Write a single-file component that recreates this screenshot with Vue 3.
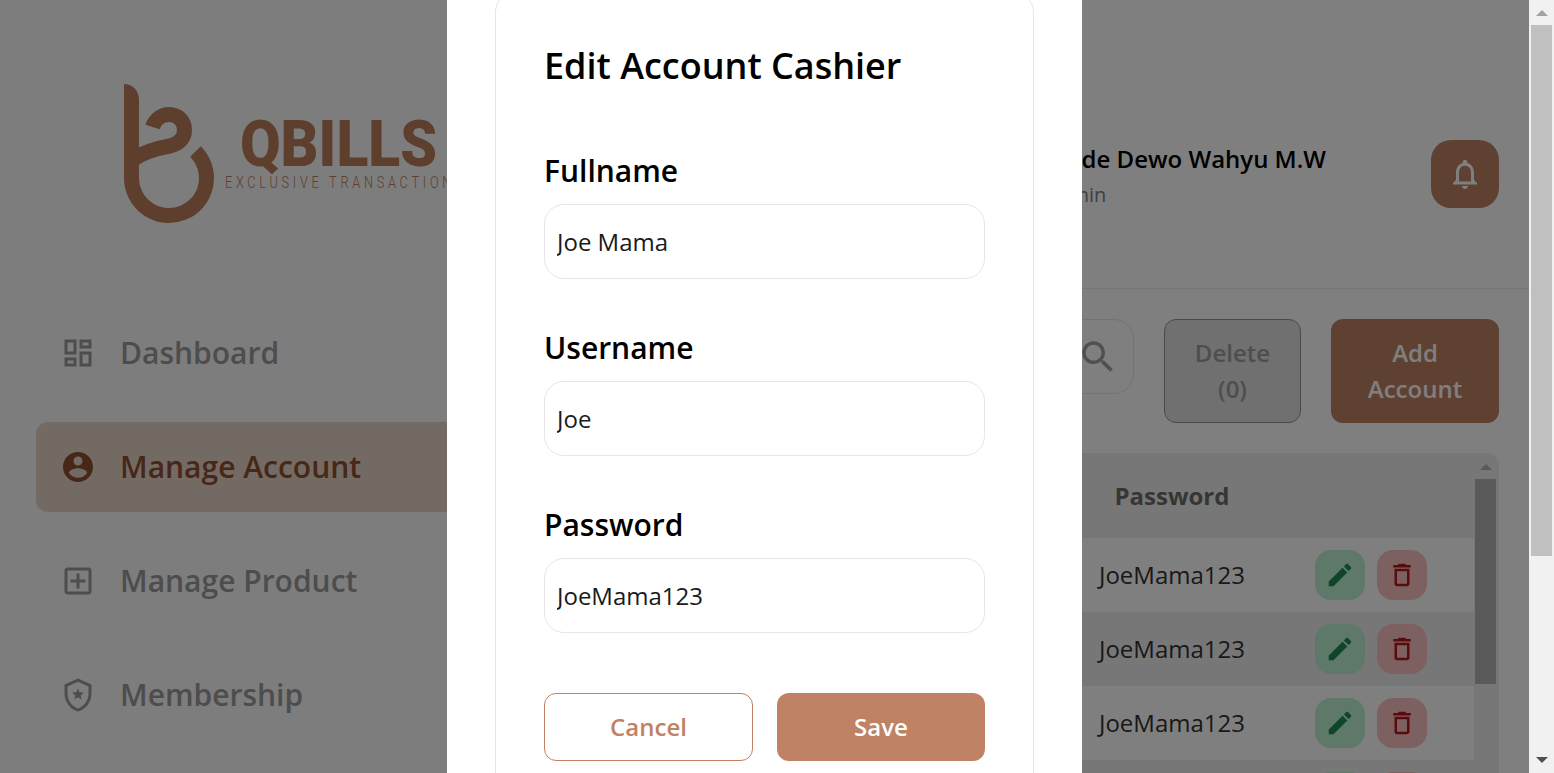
<script setup>
const nav = [
  { label: 'Dashboard', d: 'M19 5v2h-4V5h4M9 5v6H5V5h4m10 8v6h-4v-6h4M9 17v2H5v-2h4M21 3h-8v6h8V3zM11 3H3v10h8V3zm10 8h-8v10h8V11zm-10 4H3v6h8v-6z' },
  { label: 'Manage Account', active: true, d: 'M12 2C6.48 2 2 6.48 2 12s4.48 10 10 10 10-4.48 10-10S17.52 2 12 2zm0 3c1.66 0 3 1.34 3 3s-1.34 3-3 3-3-1.34-3-3 1.34-3 3-3zm0 14.2c-2.5 0-4.71-1.28-6-3.22.03-1.99 4-3.08 6-3.08 1.99 0 5.97 1.09 6 3.08-1.29 1.94-3.5 3.22-6 3.22z' },
  { label: 'Manage Product', d: 'M19 3H5c-1.1 0-2 .9-2 2v14c0 1.1.9 2 2 2h14c1.1 0 2-.9 2-2V5c0-1.1-.9-2-2-2zm0 16H5V5h14v14zM11 17h2v-4h4v-2h-4V7h-2v4H7v2h4z' },
  { label: 'Membership', d: 'M12 1L3 5v6c0 5.55 3.84 10.74 9 12 5.16-1.26 9-6.45 9-12V5l-9-4zm7 10c0 4.52-2.98 8.69-7 9.93-4.02-1.24-7-5.41-7-9.93V6.3l7-3.11 7 3.11V11zM12 7.6l1.1 2.6 2.8.2-2.1 1.85.65 2.75L12 13.5l-2.45 1.5.65-2.75-2.1-1.85 2.8-.2z' }
]
const rows = [1, 2, 3, 4]
const fields = [
  { label: 'Fullname', value: 'Joe Mama' },
  { label: 'Username', value: 'Joe' },
  { label: 'Password', value: 'JoeMama123' }
]
</script>

<template>
  <div class="page">
    <div class="main">
      <aside class="sidebar">
        <svg class="logo" width="444" height="150" viewBox="0 0 444 150">
          <g transform="translate(-36 -80)">
            <path d="M124 84C132 84 139 90 139 100V178H124Z" fill="#bd7f5c" />
            <path d="M131.5 178A37.5 37.5 0 1 0 195.5 151.5M152.5 127C155 119 162 114.5 169 114.5C178 114.5 184.5 121 184.5 130C184.5 139 178 144 170 146C158 148 145 151 132 160" fill="none" stroke="#bd7f5c" stroke-width="15" />
            <text x="240" y="166" textLength="197" lengthAdjust="spacingAndGlyphs" class="logo-name">QBILLS</text>
            <text x="225" y="188" textLength="230" lengthAdjust="spacingAndGlyphs" class="logo-tag">EXCLUSIVE TRANSACTION</text>
          </g>
        </svg>
        <nav class="nav">
          <a v-for="item in nav" :key="item.label" class="nav-item" :class="{ active: item.active }">
            <svg width="36" height="36" viewBox="0 0 24 24" fill="currentColor"><path :d="item.d" /></svg>
            <span>{{ item.label }}</span>
          </a>
        </nav>
      </aside>

      <section class="content">
        <header class="topbar">
          <div class="user">
            <div class="user-name">Made Dewo Wahyu M.W</div>
            <div class="user-role">Admin</div>
          </div>
          <button class="bell">
            <svg width="36" height="36" viewBox="0 0 24 24" fill="currentColor"><path d="M12 22c1.1 0 2-.9 2-2h-4c0 1.1.9 2 2 2zm6-6v-5c0-3.07-1.63-5.64-4.5-6.32V4c0-.83-.67-1.5-1.5-1.5s-1.5.67-1.5 1.5v.68C7.64 5.36 6 7.92 6 11v5l-2 2v1h16v-1l-2-2zm-2 1H8v-6c0-2.48 1.51-4.5 4-4.5s4 2.02 4 4.5v6z" /></svg>
          </button>
        </header>

        <div class="body">
          <div class="toolbar">
            <div class="search">
              <svg width="42" height="42" viewBox="0 0 24 24" fill="currentColor"><path d="M15.5 14h-.79l-.28-.27C15.41 12.59 16 11.11 16 9.5 16 5.91 13.09 3 9.5 3S3 5.91 3 9.5 5.91 16 9.5 16c1.61 0 3.09-.59 4.23-1.57l.27.28v.79l5 4.99L20.49 19l-4.99-5zm-6 0C7.01 14 5 11.99 5 9.5S7.01 5 9.5 5 14 7.01 14 9.5 11.99 14 9.5 14z" /></svg>
            </div>
            <button class="tool-btn delete-all">Delete (0)</button>
            <button class="tool-btn add">Add Account</button>
          </div>

          <div class="table-card">
            <div class="table">
              <div class="row head">
                <span>No</span><span>Fullname</span><span>Username</span><span class="pw">Password</span><span></span>
              </div>
              <div v-for="n in rows" :key="n" class="row">
                <span>{{ n }}</span><span>Joe Mama</span><span>Joe</span><span class="pw">JoeMama123</span>
                <span class="actions">
                  <button class="act edit">
                    <svg width="30" height="30" viewBox="0 0 24 24" fill="currentColor"><path d="M3 17.25V21h3.75L17.81 9.94l-3.75-3.75L3 17.25zM20.71 7.04c.39-.39.39-1.02 0-1.41l-2.34-2.34c-.39-.39-1.02-.39-1.41 0l-1.83 1.83 3.75 3.75 1.83-1.83z" /></svg>
                  </button>
                  <button class="act remove">
                    <svg width="30" height="30" viewBox="0 0 24 24" fill="currentColor"><path d="M6 19c0 1.1.9 2 2 2h8c1.1 0 2-.9 2-2V7H6v12zM8 9h8v10H8V9zm7.5-5l-1-1h-5l-1 1H5v2h14V4z" /></svg>
                  </button>
                </span>
              </div>
            </div>
            <div class="table-scroll">
              <i class="arrow up dim"></i>
              <div class="table-thumb"></div>
            </div>
          </div>
        </div>
      </section>

      <div class="overlay">
        <div class="dialog">
          <form class="card">
            <h1 class="title">Edit Account Cashier</h1>
            <div v-for="f in fields" :key="f.label" class="field">
              <label>{{ f.label }}</label>
              <input type="text" :value="f.value" />
            </div>
            <div class="form-actions">
              <button type="button" class="btn cancel">Cancel</button>
              <button type="button" class="btn save">Save</button>
            </div>
          </form>
        </div>
      </div>
    </div>

    <div class="page-scroll">
      <i class="arrow up"></i>
      <div class="page-thumb"></div>
      <i class="arrow down"></i>
    </div>
  </div>
</template>

<style>
html, body { margin: 0; overflow: hidden; }
</style>

<style scoped>
* { box-sizing: border-box; }
.page {
  display: flex;
  height: 773px;
  width: 1554px;
  overflow: hidden;
  font-family: "Open Sans", "Noto Sans", sans-serif;
  background: #fff;
}
.main {
  position: relative;
  flex: 0 0 1529px;
  display: flex;
  overflow: hidden;
}
.sidebar {
  flex: 0 0 480px;
  background: #fafafa;
  padding: 80px 0 0 36px;
}
.logo { display: block; overflow: visible; margin-bottom: 78px; }
.logo-name { font-family: Roboto, sans-serif; font-weight: 900; font-size: 65px; fill: #bd7f5c; }
.logo-tag { font-family: Roboto, sans-serif; font-weight: 300; font-size: 17px; letter-spacing: 5px; fill: #bd7f5c; }
.nav { display: flex; flex-direction: column; gap: 24px; }
.nav-item {
  display: flex;
  align-items: center;
  gap: 24px;
  height: 90px;
  padding-left: 24px;
  border-radius: 12px 0 0 12px;
  font-size: 30px;
  font-weight: 600;
  color: #9a9a9a;
}
.nav-item span { margin-bottom: 2px; }
.nav-item.active { background: #e9d5c8; color: #8f4f30; }

.content { flex: 1; min-width: 0; background: #fff; display: flex; flex-direction: column; }
.topbar {
  flex: 0 0 289px;
  display: flex;
  justify-content: flex-end;
  align-items: flex-start;
  gap: 105px;
  padding: 139px 30px 0 0;
  border-bottom: 1px solid #ebebeb;
}
.user-name { font-size: 24px; font-weight: 600; line-height: 40px; color: #000; }
.user-role { font-size: 20px; line-height: 32px; color: #7f7f7f; }
.bell {
  width: 68px;
  height: 68px;
  margin-top: 1px;
  border: 0;
  border-radius: 20px;
  background: #bf8264;
  color: #fff;
  display: flex;
  align-items: center;
  justify-content: center;
  padding: 0;
}
.body { padding: 30px 30px 0 30px; }
.toolbar { display: flex; gap: 30px; align-items: flex-start; }
.search {
  flex: 1;
  height: 75px;
  border: 1px solid #e6e6e6;
  border-radius: 20px;
  display: flex;
  justify-content: flex-end;
  align-items: center;
  padding-right: 14px;
  color: #a0a0a0;
}
.tool-btn {
  height: 104px;
  border-radius: 12px;
  font: 600 24px/36px "Open Sans", "Noto Sans", sans-serif;
  padding: 16px 24px;
}
.delete-all { width: 137px; padding: 15px 24px; background: #e0e0e0; border: 1px solid #959595; color: #9c9c9c; }
.add { width: 168px; background: #bf8264; border: 0; color: #fff; }

.table-card {
  margin-top: 30px;
  display: flex;
  background: #eee;
  border-radius: 12px 12px 0 0;
  height: 400px;
  overflow: hidden;
}
.table { flex: 1; min-width: 0; }
.row {
  display: grid;
  grid-template-columns: 70px 260px 1fr 218px 193px;
  align-items: center;
  height: 74px;
  font-size: 24px;
  color: #333;
  background: #fff;
}
.row:nth-child(odd) { background: #eee; }
.row.head { height: 85px; font-weight: 700; color: #6c6c6c; background: #eee; }
.pw { text-align: center; }
.row:not(.head) .pw { margin-bottom: 2px; }
.actions { display: flex; gap: 12px; padding-left: 34px; }
.act {
  width: 50px;
  height: 50px;
  border: 0;
  border-radius: 16px;
  padding: 0;
  display: flex;
  align-items: center;
  justify-content: center;
}
.edit { background: #bdf0d2; color: #1f8a52; }
.remove { background: #fbc2c2; color: #b41818; }
.table-scroll { flex: 0 0 25px; display: flex; flex-direction: column; align-items: center; padding: 11px 2px 0 0; }
.table-thumb { width: 21px; height: 205px; margin-top: 9px; background: #b4b4b4; }

.arrow { display: block; width: 0; height: 0; border-left: 6px solid transparent; border-right: 6px solid transparent; }
.arrow.up { border-bottom: 6px solid #a3a3a3; }
.arrow.up.dim { border-bottom-color: #b4b4b4; }
.arrow.down { border-top: 6px solid #505050; }

.overlay {
  position: absolute;
  inset: 0;
  background: rgba(0, 0, 0, 0.5);
  display: flex;
  justify-content: center;
}
.dialog {
  width: 635px;
  height: 100%;
  background: #fff;
  padding: 0 48px;
  overflow: hidden;
}
.card {
  margin-top: -8px;
  height: 900px;
  border: 1px solid #e5e5e5;
  border-radius: 20px;
  padding: 48px 48px 0;
}
.title { margin: 0; font-size: 36px; line-height: 49px; font-weight: 600; color: #000; }
.field { display: flex; flex-direction: column; }
.field label { font-size: 30px; font-weight: 600; line-height: 38px; margin-bottom: 14px; color: #000; }
.field:nth-of-type(1) { margin-top: 62px; }
.field + .field { margin-top: 50px; }
.field input {
  height: 75px;
  width: 100%;
  border: 1px solid #e6e6e6;
  border-radius: 20px;
  padding: 0 12px;
  font: 400 24px "Open Sans", "Noto Sans", sans-serif;
  color: #1a1a1a;
  outline: none;
  background: #fff;
}
.form-actions { display: flex; gap: 24px; margin-top: 60px; }
.btn {
  height: 68px;
  padding: 0 0 2px;
  border-radius: 12px;
  font: 600 24px "Open Sans", "Noto Sans", sans-serif;
}
.cancel { flex: 0 0 209px; background: #fff; border: 1px solid #bf8264; color: #bf8264; }
.save { flex: 0 0 208px; background: #bf8264; border: 0; color: #fff; }

.page-scroll {
  flex: 0 0 25px;
  background: #f1f1f1;
  display: flex;
  flex-direction: column;
  align-items: center;
  position: relative;
  padding-top: 10px;
}
.page-thumb { width: 21px; height: 531px; margin-top: 9px; background: #c0c0c0; }
.page-scroll .arrow.down { position: absolute; bottom: 10px; }
</style>
